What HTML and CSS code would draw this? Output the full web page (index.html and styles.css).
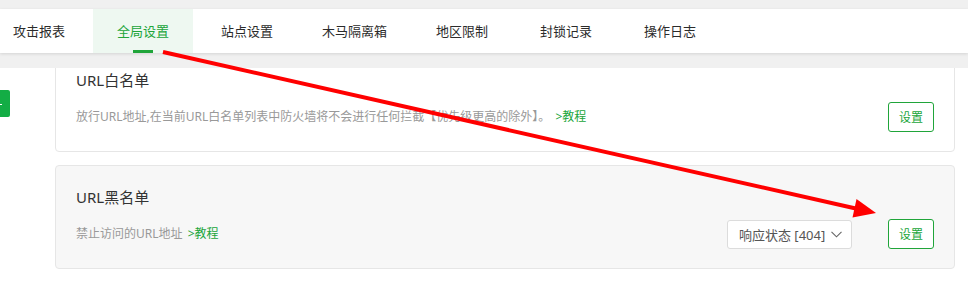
FILE: index.html
```html
<!DOCTYPE html>
<html lang="zh-CN">
<head>
  <meta charset="UTF-8" />
  <title>网站防火墙 - 全局设置</title>
  <link rel="stylesheet" href="styles.css">
</head>
<body>

<!-- tabs -->
<div class="tab-bar">
  <span class="tab">攻击报表</span>
  <span class="tab active">全局设置</span>
  <span class="tab tight">站点设置</span>
  <span class="tab tight">木马隔离箱</span>
  <span class="tab">地区限制</span>
  <span class="tab">封锁记录</span>
  <span class="tab">操作日志</span>
</div>

<div class="main">
  <div class="side">
    <button class="side-btn" type="button" aria-label="添加"></button>
  </div>

  <div class="cards">
    <div class="card">
      <div class="card-info">
        <div class="card-title">URL白名单</div>
        <div class="card-desc">放行URL地址,在当前URL白名单列表中防火墙将不会进行任何拦截【优先级更高的除外】。 <a class="help">&gt;教程</a></div>
      </div>
      <div class="card-ctrl">
        <button class="btn-set" type="button">设置</button>
      </div>
    </div>

    <div class="card grey">
      <div class="card-info">
        <div class="card-title">URL黑名单</div>
        <div class="card-desc">禁止访问的URL地址 <a class="help">&gt;教程</a></div>
      </div>
      <div class="card-ctrl">
        <div class="select">
          <span>响应状态 [404]</span>
          <svg width="11" height="7" viewBox="0 0 11 7"><polyline points="0.5,0.8 5.5,5.8 10.5,0.8" fill="none" stroke="#666" stroke-width="1.1"/></svg>
        </div>
        <button class="btn-set" type="button">设置</button>
      </div>
    </div>
  </div>
</div>

<!-- annotation arrow drawn over the screenshot -->
<svg class="annot" width="968" height="287" viewBox="0 0 968 287">
  <line x1="163" y1="52" x2="858" y2="209" stroke="#f00" stroke-width="4"/>
  <polygon points="856.5,199 876,213 852.5,217.5" fill="#f00"/>
</svg>

</body>
</html>
```

FILE: styles.css
```css
body {
  margin: 0;
  padding-top: 9px;
  height: 287px;
  box-sizing: border-box;
  overflow: hidden;
  background: #f0f0f0;
  font-family: "Noto Sans", "Noto Sans CJK SC", sans-serif;
  color: #333;
  position: relative;
}

.tab-bar {
  display: flex;
  height: 44px;
  background: #fff;
  box-shadow: 0 1px 3px rgba(0,0,0,0.12);
  position: relative;
  z-index: 1;
}

.tab {
  position: relative;
  padding: 0 24px;
  margin-right: 4px;
  line-height: 44px;
  font-size: 13px;
  color: #2b2b2b;
  white-space: nowrap;
}

.tab.tight {
  margin-right: 1px;
}

.tab:first-child {
  padding-left: 13px;
}

.tab.active {
  background: #eef8f1;
  color: #20a53a;
}

.tab.active::after {
  content: "";
  position: absolute;
  left: 40px;
  bottom: 0;
  width: 20px;
  height: 3px;
  background: #20a53a;
}

.main {
  display: flex;
  margin-top: 15px;
  background: #fff;
  height: 219px;
  overflow: hidden;
}

.side {
  width: 55px;
  flex-shrink: 0;
}

.side-btn {
  position: relative;
  display: block;
  margin-top: 22px;
  width: 10px;
  height: 27px;
  border: none;
  border-radius: 0 2px 2px 0;
  background: #13ad45;
  padding: 0;
}

/* end of the cut-off label */
.side-btn::after {
  content: "";
  position: absolute;
  left: 0;
  top: 14px;
  width: 2px;
  height: 1px;
  background: #fff;
}

.cards {
  flex: 1;
  margin-right: 13px;
  margin-top: -20px;
  display: flex;
  flex-direction: column;
  gap: 13px;
}

.card {
  display: flex;
  justify-content: space-between;
  align-items: flex-end;
  padding: 19px 20px;
  border: 1px solid #e6e6e6;
  border-radius: 4px;
  background: #fff;
}

.card.grey {
  background: #f7f7f7;
}

.card-title {
  font-size: 15px;
  line-height: 24px;
  color: #333;
}

.card-desc {
  margin-top: 10px;
  font-size: 12px;
  line-height: 30px;
  color: #999;
}

.help {
  color: #20a53a;
  cursor: pointer;
  margin-left: 2px;
}

.card-ctrl {
  display: flex;
  align-items: center;
  gap: 36px;
}

.select {
  width: 125px;
  height: 29px;
  box-sizing: border-box;
  display: flex;
  align-items: center;
  justify-content: space-between;
  padding: 0 9px 0 11px;
  background: #fff;
  border: 1px solid #dcdcdc;
  border-radius: 3px;
  font-size: 13px;
  color: #555;
}

.btn-set {
  height: 30px;
  padding: 0 10px;
  border: 1px solid #20a53a;
  border-radius: 3px;
  background: #fff;
  color: #20a53a;
  font-family: inherit;
  font-size: 12px;
  cursor: pointer;
}

.annot {
  position: absolute;
  left: 0;
  top: 0;
  z-index: 5;
  pointer-events: none;
}
```
